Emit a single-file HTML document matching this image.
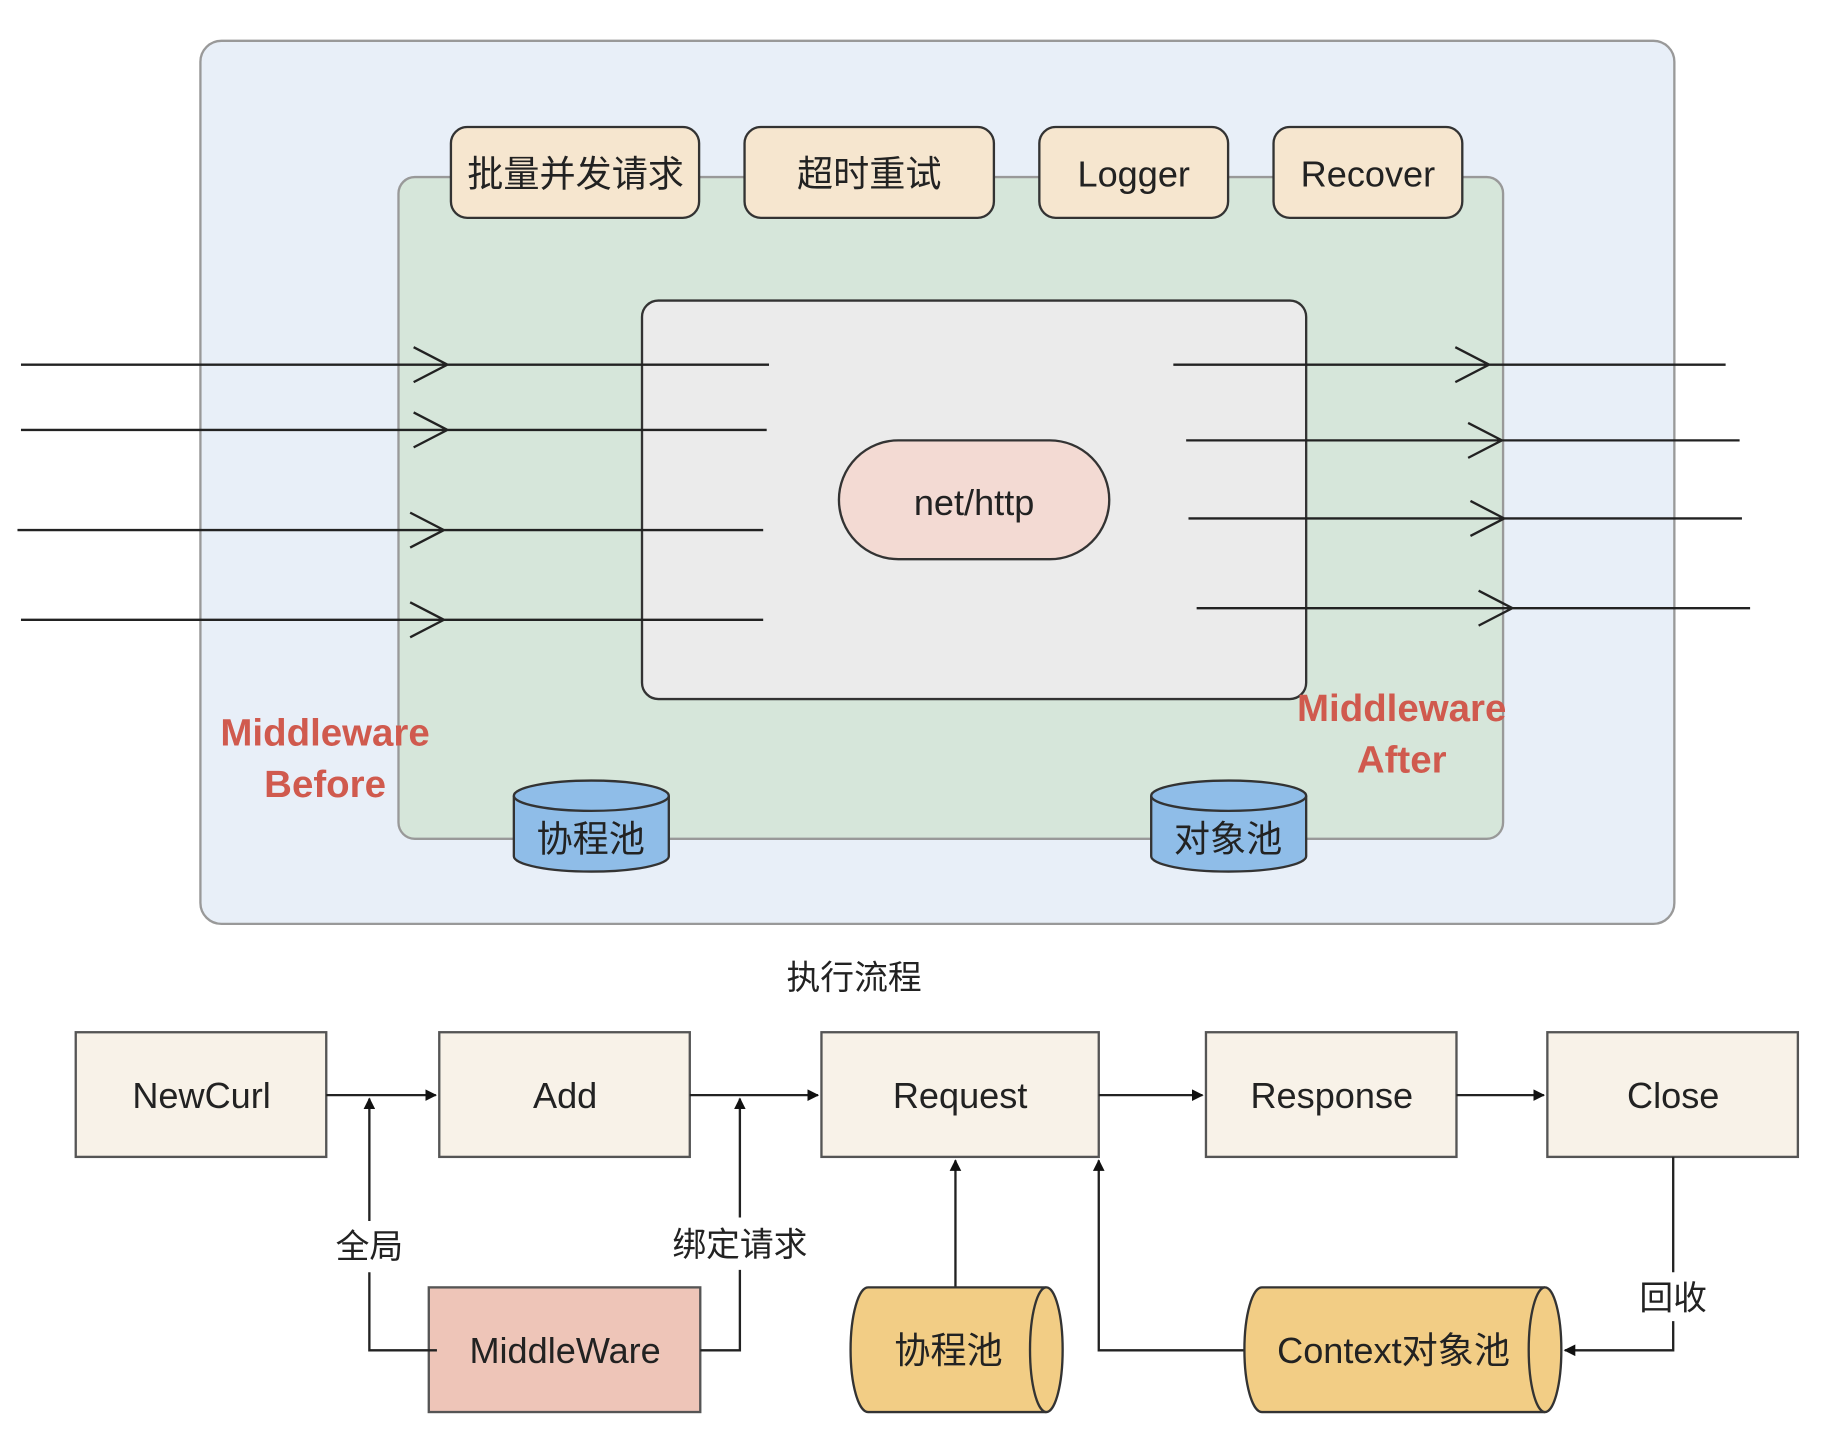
<!DOCTYPE html>
<html><head><meta charset="utf-8"><style>
html,body{margin:0;padding:0;background:#fff;width:1827px;height:1440px;overflow:hidden}
svg{display:block}
text{font-family:"Liberation Sans","Noto Sans CJK SC",sans-serif;fill:#222}
</style></head><body>
<svg width="1827" height="1440" viewBox="0 0 1568 1236" preserveAspectRatio="none">
<defs><marker id="a" markerWidth="10" markerHeight="10" refX="9" refY="5" orient="auto" markerUnits="userSpaceOnUse"><path d="M0,0 L10,5 L0,10 Z" fill="#111"/></marker></defs>
<rect x="172" y="35" width="1265" height="758" rx="18" fill="#e8eff8" stroke="#999" stroke-width="2"/>
<rect x="342" y="152" width="948" height="568" rx="14" fill="#d6e6da" stroke="#999" stroke-width="2"/>
<g fill="#f6e6cf" stroke="#333" stroke-width="2">
<rect x="387" y="109" width="213" height="78" rx="14"/>
<rect x="639" y="109" width="214" height="78" rx="14"/>
<rect x="892" y="109" width="162" height="78" rx="14"/>
<rect x="1093" y="109" width="162" height="78" rx="14"/>
</g>
<g font-size="31" text-anchor="middle">
<text x="494" y="160">批量并发请求</text>
<text x="746" y="160">超时重试</text>
<text x="973" y="160">Logger</text>
<text x="1174" y="160">Recover</text>
</g>
<rect x="551" y="258" width="570" height="342" rx="14" fill="#ebebeb" stroke="#333" stroke-width="2"/>
<rect x="720" y="378" width="232" height="102" rx="51" fill="#f3dad3" stroke="#333" stroke-width="2"/>
<text x="836" y="442" font-size="31" text-anchor="middle">net/http</text>
<g stroke="#222" stroke-width="2" fill="none">
<path d="M18 313H660M355 298L384 313L355 328"/>
<path d="M18 369H658M355 354L384 369L355 384"/>
<path d="M15 455H655M352 440L381 455L352 470"/>
<path d="M18 532H655M352 517L381 532L352 547"/>
<path d="M1007 313H1481M1249 298L1278 313L1249 328"/>
<path d="M1018 378H1493M1260 363L1289 378L1260 393"/>
<path d="M1020 445H1495M1262 430L1291 445L1262 460"/>
<path d="M1027 522H1502M1269 507L1298 522L1269 537"/>
</g>
<g font-size="33" font-weight="bold" text-anchor="middle">
<text x="279" y="640" style="fill:#d05a4e">Middleware</text>
<text x="279" y="684" style="fill:#d05a4e">Before</text>
<text x="1203" y="619" style="fill:#d05a4e">Middleware</text>
<text x="1203" y="663" style="fill:#d05a4e">After</text>
</g>
<g stroke="#333" stroke-width="2" fill="#8fbde8">
<path d="M441 683V735A66 13 0 0 0 574 735V683"/>
<ellipse cx="507.5" cy="683" rx="66.5" ry="13"/>
<path d="M988 683V735A66 13 0 0 0 1121 735V683"/>
<ellipse cx="1054.5" cy="683" rx="66.5" ry="13"/>
</g>
<text x="507" y="731" font-size="31" text-anchor="middle">协程池</text>
<text x="1054" y="731" font-size="31" text-anchor="middle">对象池</text>
<text x="733" y="849" font-size="29" text-anchor="middle">执行流程</text>
<g fill="#f8f2e8" stroke="#555" stroke-width="2">
<rect x="65" y="886" width="215" height="107"/>
<rect x="377" y="886" width="215" height="107"/>
<rect x="705" y="886" width="238" height="107"/>
<rect x="1035" y="886" width="215" height="107"/>
<rect x="1328" y="886" width="215" height="107"/>
</g>
<rect x="368" y="1105" width="233" height="107" fill="#eec5b8" stroke="#555" stroke-width="2"/>
<g font-size="31" text-anchor="middle">
<text x="173" y="951">NewCurl</text>
<text x="485" y="951">Add</text>
<text x="824" y="951">Request</text>
<text x="1143" y="951">Response</text>
<text x="1436" y="951">Close</text>
<text x="485" y="1170">MiddleWare</text>
</g>
<g stroke="#222" stroke-width="2" fill="none">
<path d="M280 940H374" marker-end="url(#a)"/>
<path d="M592 940H702" marker-end="url(#a)"/>
<path d="M943 940H1032" marker-end="url(#a)"/>
<path d="M1250 940H1325" marker-end="url(#a)"/>
<path d="M375 1159H317V1092M317 1048V943" marker-end="url(#a)"/>
<path d="M601 1159H635V1090M635 1045V943" marker-end="url(#a)"/>
<path d="M820 1105V996" marker-end="url(#a)"/>
<path d="M1068 1159H943V996" marker-end="url(#a)"/>
<path d="M1436 993V1092M1436 1134V1159H1343" marker-end="url(#a)"/>
</g>
<g font-size="29" text-anchor="middle">
<text x="317" y="1080">全局</text>
<text x="635" y="1078">绑定请求</text>
<text x="1436" y="1124">回收</text>
</g>
<g stroke="#333" stroke-width="2" fill="#f2cd85">
<path d="M898 1105H745A15 53.5 0 0 0 745 1212H898"/>
<ellipse cx="898" cy="1158.5" rx="14" ry="53.5"/>
<path d="M1326 1105H1083A15 53.5 0 0 0 1083 1212H1326"/>
<ellipse cx="1326" cy="1158.5" rx="14" ry="53.5"/>
</g>
<text x="814" y="1170" font-size="31" text-anchor="middle">协程池</text>
<text x="1196" y="1170" font-size="31" text-anchor="middle">Context对象池</text>
</svg>
</body></html>
